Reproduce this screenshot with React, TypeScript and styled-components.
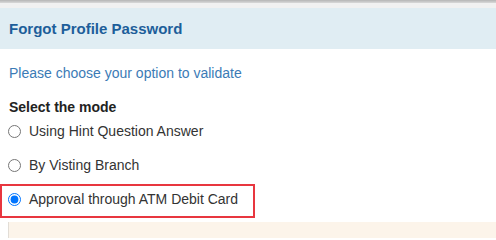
import React from "react";
import styled, { createGlobalStyle } from "styled-components";

const Global = createGlobalStyle`
  html, body { margin: 0; padding: 0; background: #fff; }
  body { font-family: "Liberation Sans", Arial, sans-serif; width: 496px; height: 238px; overflow: hidden; }
`;

const TopShade = styled.div`
  height: 3px;
  background: linear-gradient(#b5b5b5, #d9d9d9);
`;

const TopStrip = styled.div`
  height: 5px;
  background: #f1f1f1;
`;

const Header = styled.div`
  height: 41px;
  background: #e0edf3;
  display: flex;
  align-items: center;
  padding-left: 9px;
`;

const Title = styled.h1`
  margin: 0;
  font-size: 15px;
  font-weight: bold;
  color: #1d5e9a;
`;

const Body = styled.div`
  padding: 17px 0 0 9px;
`;

const Prompt = styled.div`
  font-size: 14px;
  color: #3b7bb6;
  line-height: 15px;
`;

const ModeLabel = styled.div`
  margin-top: 18px;
  font-size: 14px;
  font-weight: bold;
  color: #222;
  line-height: 16px;
`;

const Options = styled.div`
  display: flex;
  flex-direction: column;
  margin-top: 1px;
  margin-left: -9px;
`;

const Option = styled.label<{ $selected?: boolean }>`
  display: flex;
  align-items: center;
  width: 255px;
  height: 34px;
  box-sizing: border-box;
  padding: 0 0 4px 6px;
  border: 2px solid ${(p) => (p.$selected ? "#e8363f" : "transparent")};
  font-size: 14px;
  color: #333;
  gap: 8px;
`;

const Radio = styled.input`
  width: 13px;
  height: 13px;
  margin: 0;
`;

const Panel = styled.div`
  margin-top: 4px;
  margin-left: -1px;
  height: 16px;
  background: #fcf4ea;
  border-left: 1px solid #e2ddd6;
`;

const options = [
  "Using Hint Question Answer",
  "By Visting Branch",
  "Approval through ATM Debit Card",
];

export default function App() {
  return (
    <>
      <Global />
      <TopShade />
      <TopStrip />
      <Header>
        <Title>Forgot Profile Password</Title>
      </Header>
      <Body>
        <Prompt>Please choose your option to validate</Prompt>
        <ModeLabel>Select the mode</ModeLabel>
        <Options>
          {options.map((o, i) => (
            <Option key={o} $selected={i === 2}>
              <Radio type="radio" name="mode" defaultChecked={i === 2} />
              {o}
            </Option>
          ))}
        </Options>
        <Panel />
      </Body>
    </>
  );
}
